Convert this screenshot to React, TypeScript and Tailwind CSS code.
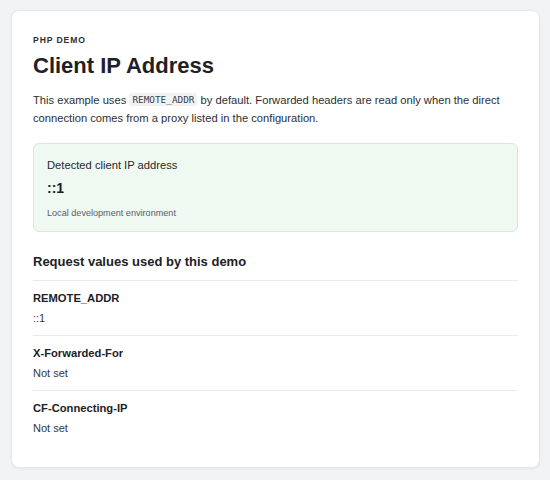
import React from "react";

const rows = [
  { name: "REMOTE_ADDR", value: "::1" },
  { name: "X-Forwarded-For", value: "Not set" },
  { name: "CF-Connecting-IP", value: "Not set" },
];

export default function App() {
  return (
    <div
      className="min-h-[480px] w-[550px] bg-[#f2f3f5] pt-[10px] pl-[11px]"
      style={{ fontFamily: '"Liberation Sans", Arial, Helvetica, sans-serif' }}
    >
      <div className="h-[458px] w-[529px] rounded-[8px] border border-[#e6e8eb] bg-white px-[21px] pt-[23px] shadow-[0_1px_3px_rgba(0,0,0,0.06)]">
        <p className="text-[8.6px] font-bold leading-[12px] tracking-[0.9px] text-[#2b2f33]">
          PHP DEMO
        </p>
        <h1 className="mt-[6px] text-[22px] font-bold leading-[28px] text-[#1d2125]">
          Client IP Address
        </h1>
        <p className="mt-[12px] text-[11.2px] leading-[17.6px] text-[#2b2f33]">
          This example uses{" "}
          <code
            className="inline-block rounded-[3px] bg-[#f1f2f4] px-[3px] align-[1px] text-[9.4px] leading-[13px] text-[#3a3f44]"
            style={{ fontFamily: '"DejaVu Sans Mono", "Liberation Mono", monospace' }}
          >
            REMOTE_ADDR
          </code>{" "}
          by default. Forwarded headers are read only when the direct connection comes from a proxy
          listed in the configuration.
        </p>

        <div className="mt-[16px] h-[89px] rounded-[6px] border border-[#d5eadb] bg-[#eff8f1] px-[13px] pt-[13px]">
          <p className="text-[11.2px] leading-[16px] text-[#24292e]">Detected client IP address</p>
          <p className="mt-[5px] text-[14px] font-bold leading-[20px] text-[#1d2125]">::1</p>
          <p className="mt-[8px] text-[9.1px] leading-[14px] text-[#5a6066]">
            Local development environment
          </p>
        </div>

        <h2 className="mt-[21px] text-[13px] font-bold leading-[18px] text-[#1d2125]">
          Request values used by this demo
        </h2>

        <div className="mt-[9px]">
          {rows.map((row) => (
            <div key={row.name} className="border-t border-[#e8eaed] pt-[9px] pb-[9px]">
              <p className="text-[11.2px] font-bold leading-[16px] text-[#1d2125]">{row.name}</p>
              <p className="mt-[4px] text-[11px] leading-[16px] text-[#33383d]">{row.value}</p>
            </div>
          ))}
        </div>
      </div>
    </div>
  );
}
